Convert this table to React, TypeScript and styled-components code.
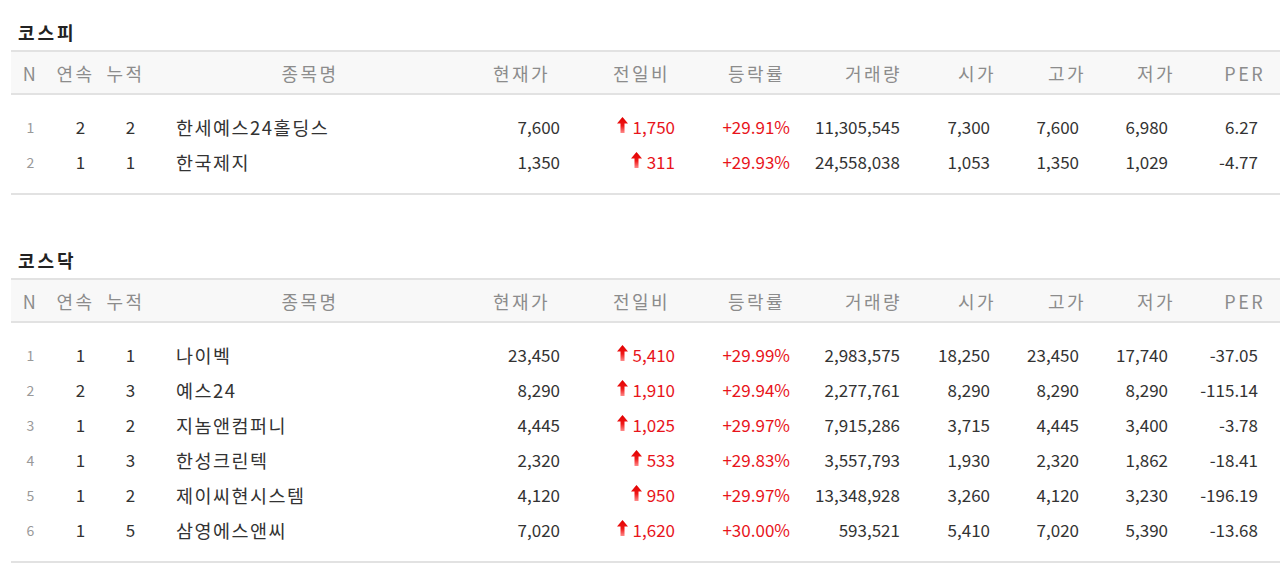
import React from "react";
import styled, { createGlobalStyle } from "styled-components";

const GlobalStyle = createGlobalStyle`
  html, body { margin: 0; padding: 0; background: #fff; }
  body { font-family: "Noto Sans CJK KR", "Noto Sans", sans-serif; overflow: hidden; }
`;

const Page = styled.div`
  padding-left: 11px;
  display: flex;
  flex-direction: column;
`;

const Section = styled.section<{ $gap: number }>`
  margin-top: ${(p) => p.$gap}px;
  padding-top: 20px;
`;

const Title = styled.h2`
  margin: 0 0 6px;
  padding-left: 7px;
  height: 24px;
  line-height: 24px;
  font-size: 18px;
  font-weight: 700;
  letter-spacing: 3px;
  color: #222;
`;

const Table = styled.table`
  width: 1269px;
  table-layout: fixed;
  border-collapse: collapse;
  border-top: 2px solid #e2e2e2;
  border-bottom: 2px solid #e2e2e2;
`;

const HeadRow = styled.tr`
  background: #f8f8f8;
  border-bottom: 2px solid #e2e2e2;
`;

const HeadCell = styled.th<{ $align: string; $pr: number }>`
  height: 41px;
  padding: 0 ${(p) => p.$pr}px 0 0;
  text-align: ${(p) => p.$align};
  font-size: 18px;
  font-weight: 400;
  letter-spacing: 2.4px;
  color: #8c8c8c;
  line-height: 20px;
  white-space: nowrap;
`;

const BodyRow = styled.tr`
  &:first-child td { padding-top: 14px; }
  &:last-child td { padding-bottom: 14px; }
`;

const Cell = styled.td<{ $align: string; $pr: number; $pl: number; $tone: string; $name: boolean }>`
  height: 35px;
  padding: 0 ${(p) => p.$pr}px 0 ${(p) => p.$pl}px;
  text-align: ${(p) => p.$align};
  vertical-align: middle;
  font-size: ${(p) => (p.$tone === "muted" ? "14px" : p.$name ? "18.5px" : "17px")};
  letter-spacing: ${(p) => (p.$name ? "1.5px" : "0")};
  color: ${(p) => (p.$tone === "muted" ? "#999" : p.$tone === "up" ? "#e8141b" : "#333")};
  line-height: 20px;
  white-space: nowrap;
`;

const Change = styled.span`
  display: inline-flex;
  align-items: center;
  gap: 5px;
`;

const ArrowIcon = styled.svg`
  width: 11px;
  height: 16px;
  margin-top: -4px;
  flex: none;
`;

type Col = {
  label: string;
  width: number;
  headAlign: string;
  headPr: number;
  align: string;
  pr: number;
  pl: number;
  tone?: string;
  name?: boolean;
};

const cols: Col[] = [
  { label: "N", width: 39, headAlign: "center", headPr: 0, align: "center", pr: 0, pl: 0, tone: "muted" },
  { label: "연속", width: 51, headAlign: "center", headPr: 0, align: "center", pr: 0, pl: 10 },
  { label: "누적", width: 49, headAlign: "center", headPr: 0, align: "center", pr: 0, pl: 10 },
  { label: "종목명", width: 320, headAlign: "center", headPr: 0, align: "left", pr: 0, pl: 26, name: true },
  { label: "현재가", width: 110, headAlign: "right", headPr: 30, align: "right", pr: 20, pl: 0 },
  { label: "전일비", width: 115, headAlign: "right", headPr: 25, align: "right", pr: 20, pl: 0, tone: "up" },
  { label: "등락률", width: 115, headAlign: "right", headPr: 25, align: "right", pr: 20, pl: 0, tone: "up" },
  { label: "거래량", width: 110, headAlign: "right", headPr: 18, align: "right", pr: 20, pl: 0 },
  { label: "시가", width: 90, headAlign: "right", headPr: 14, align: "right", pr: 20, pl: 0 },
  { label: "고가", width: 90, headAlign: "right", headPr: 14, align: "right", pr: 21, pl: 0 },
  { label: "저가", width: 90, headAlign: "right", headPr: 15, align: "right", pr: 22, pl: 0 },
  { label: "PER", width: 90, headAlign: "right", headPr: 15, align: "right", pr: 22, pl: 0 },
];

const kospi: string[][] = [
  ["1", "2", "2", "한세예스24홀딩스", "7,600", "1,750", "+29.91%", "11,305,545", "7,300", "7,600", "6,980", "6.27"],
  ["2", "1", "1", "한국제지", "1,350", "311", "+29.93%", "24,558,038", "1,053", "1,350", "1,029", "-4.77"],
];

const kosdaq: string[][] = [
  ["1", "1", "1", "나이벡", "23,450", "5,410", "+29.99%", "2,983,575", "18,250", "23,450", "17,740", "-37.05"],
  ["2", "2", "3", "예스24", "8,290", "1,910", "+29.94%", "2,277,761", "8,290", "8,290", "8,290", "-115.14"],
  ["3", "1", "2", "지놈앤컴퍼니", "4,445", "1,025", "+29.97%", "7,915,286", "3,715", "4,445", "3,400", "-3.78"],
  ["4", "1", "3", "한성크린텍", "2,320", "533", "+29.83%", "3,557,793", "1,930", "2,320", "1,862", "-18.41"],
  ["5", "1", "2", "제이씨현시스템", "4,120", "950", "+29.97%", "13,348,928", "3,260", "4,120", "3,230", "-196.19"],
  ["6", "1", "5", "삼영에스앤씨", "7,020", "1,620", "+30.00%", "593,521", "5,410", "7,020", "5,390", "-13.68"],
];

function UpArrow({ id }: { id: string }) {
  return (
    <ArrowIcon viewBox="0 0 11 16" aria-hidden>
      <defs>
        <linearGradient id={id} x1="0" y1="0" x2="0" y2="1">
          <stop offset="0" stopColor="#e00000" />
          <stop offset="0.55" stopColor="#f01818" />
          <stop offset="1" stopColor="#ff8a8a" />
        </linearGradient>
      </defs>
      <polygon points="5.5,0 11,6.5 7.5,6.5 7.5,16 3.5,16 3.5,6.5 0,6.5" fill={`url(#${id})`} />
    </ArrowIcon>
  );
}

function StockTable({ title, rows, gap, prefix }: { title: string; rows: string[][]; gap: number; prefix: string }) {
  return (
    <Section $gap={gap}>
      <Title>{title}</Title>
      <Table>
        <colgroup>
          {cols.map((c) => (
            <col key={c.label} style={{ width: c.width }} />
          ))}
        </colgroup>
        <thead>
          <HeadRow>
            {cols.map((c) => (
              <HeadCell key={c.label} $align={c.headAlign} $pr={c.headPr}>
                {c.label}
              </HeadCell>
            ))}
          </HeadRow>
        </thead>
        <tbody>
          {rows.map((r, ri) => (
            <BodyRow key={ri}>
              {r.map((v, ci) => {
                const c = cols[ci];
                return (
                  <Cell
                    key={ci}
                    $align={c.align}
                    $pr={c.pr}
                    $pl={c.pl}
                    $tone={c.tone ?? "base"}
                    $name={!!c.name}
                  >
                    {ci === 5 ? (
                      <Change>
                        <UpArrow id={`${prefix}-arr-${ri}`} />
                        {v}
                      </Change>
                    ) : (
                      v
                    )}
                  </Cell>
                );
              })}
            </BodyRow>
          ))}
        </tbody>
      </Table>
    </Section>
  );
}

export default function App() {
  return (
    <>
      <GlobalStyle />
      <Page>
        <StockTable title="코스피" rows={kospi} gap={0} prefix="kospi" />
        <StockTable title="코스닥" rows={kosdaq} gap={33} prefix="kosdaq" />
      </Page>
    </>
  );
}
